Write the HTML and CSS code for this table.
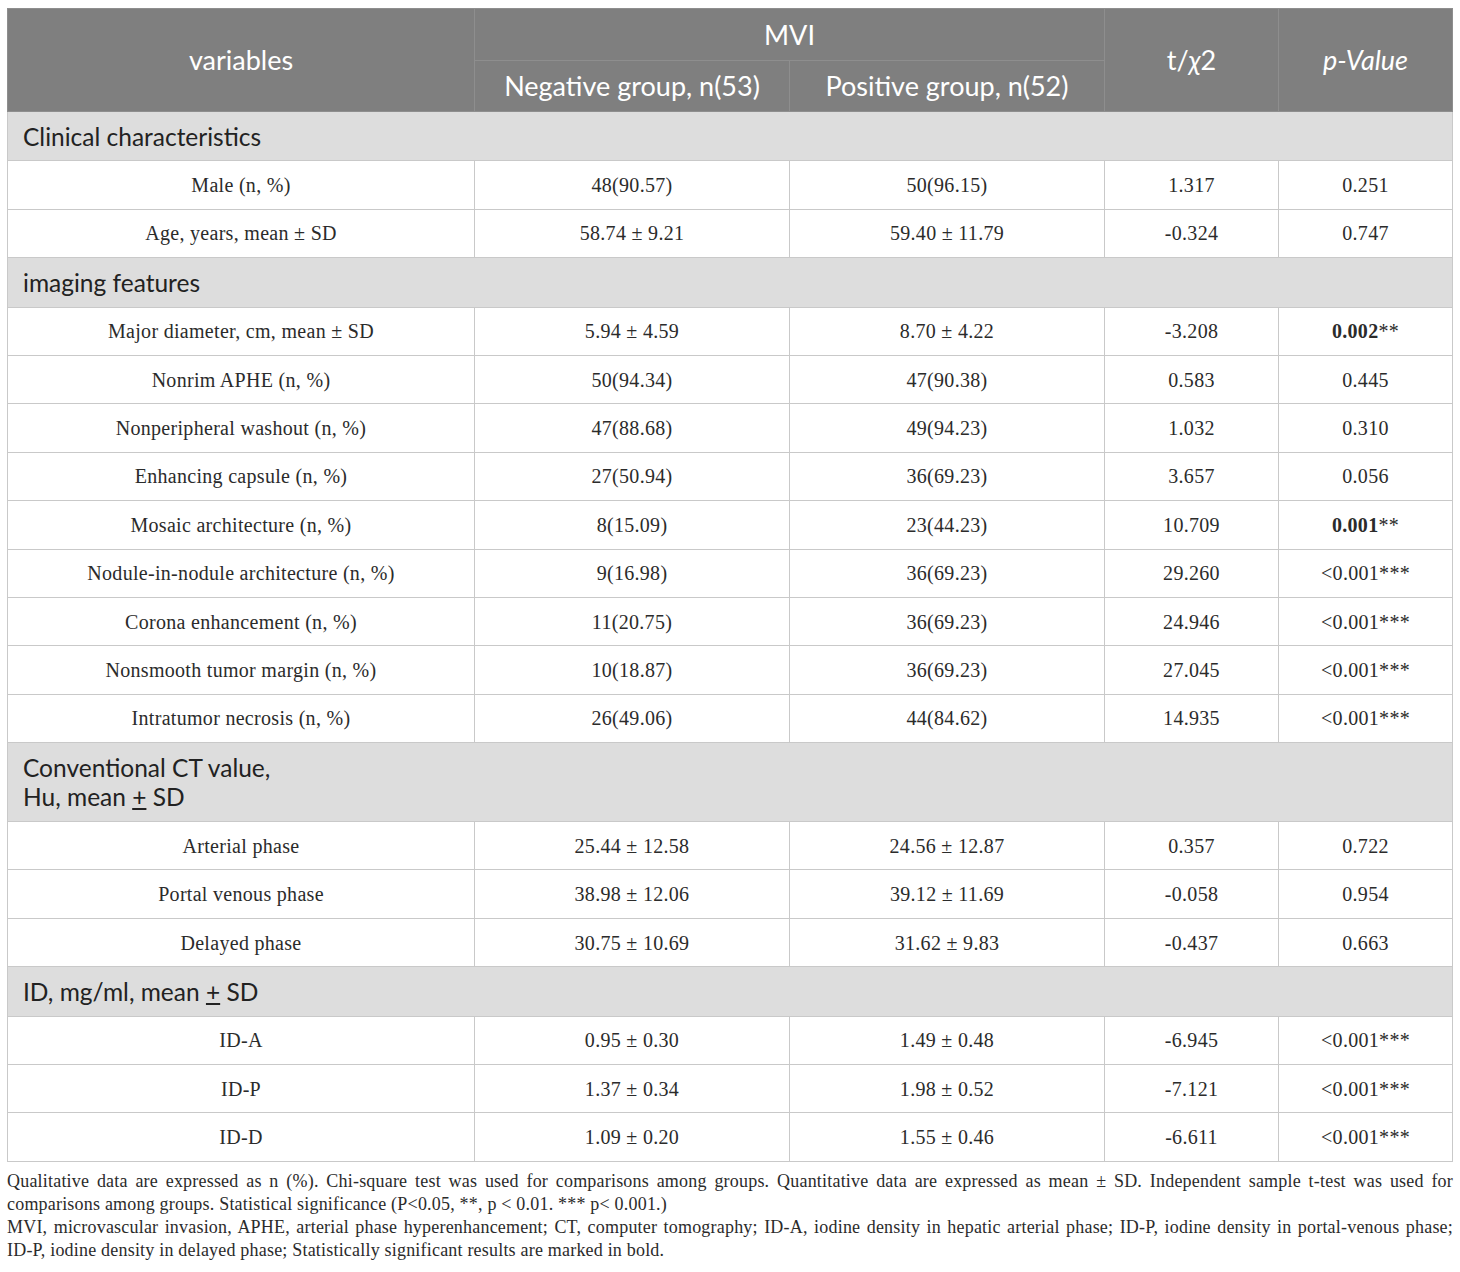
FILE: index.html
```html
<!DOCTYPE html>
<html lang="en">
<head>
<meta charset="utf-8">
<title>MVI table</title>
<link rel="stylesheet" href="styles.css">
</head>
<body>
<div class="page">
<table class="tbl">
  <colgroup>
    <col class="c-var"><col class="c-grp"><col class="c-grp"><col class="c-stat"><col class="c-stat">
  </colgroup>
  <thead>
    <tr class="h1">
      <th rowspan="2">variables</th>
      <th colspan="2">MVI</th>
      <th rowspan="2">t/<i>χ</i>2</th>
      <th rowspan="2"><i>p-Value</i></th>
    </tr>
    <tr class="h2">
      <th>Negative group, n(53)</th>
      <th>Positive group, n(52)</th>
    </tr>
  </thead>
  <tbody>
    <tr class="sec"><td colspan="5">Clinical characteristics</td></tr>
    <tr><td>Male (n, %)</td><td>48(90.57)</td><td>50(96.15)</td><td>1.317</td><td>0.251</td></tr>
    <tr><td>Age, years, mean ± SD</td><td>58.74 ± 9.21</td><td>59.40 ± 11.79</td><td>-0.324</td><td>0.747</td></tr>
    <tr class="sec"><td colspan="5">imaging features</td></tr>
    <tr><td>Major diameter, cm, mean ± SD</td><td>5.94 ± 4.59</td><td>8.70 ± 4.22</td><td>-3.208</td><td><b>0.002</b>**</td></tr>
    <tr><td>Nonrim APHE (n, %)</td><td>50(94.34)</td><td>47(90.38)</td><td>0.583</td><td>0.445</td></tr>
    <tr><td>Nonperipheral washout (n, %)</td><td>47(88.68)</td><td>49(94.23)</td><td>1.032</td><td>0.310</td></tr>
    <tr><td>Enhancing capsule (n, %)</td><td>27(50.94)</td><td>36(69.23)</td><td>3.657</td><td>0.056</td></tr>
    <tr><td>Mosaic architecture (n, %)</td><td>8(15.09)</td><td>23(44.23)</td><td>10.709</td><td><b>0.001</b>**</td></tr>
    <tr><td>Nodule-in-nodule architecture (n, %)</td><td>9(16.98)</td><td>36(69.23)</td><td>29.260</td><td>&lt;0.001***</td></tr>
    <tr><td>Corona enhancement (n, %)</td><td>11(20.75)</td><td>36(69.23)</td><td>24.946</td><td>&lt;0.001***</td></tr>
    <tr><td>Nonsmooth tumor margin (n, %)</td><td>10(18.87)</td><td>36(69.23)</td><td>27.045</td><td>&lt;0.001***</td></tr>
    <tr><td>Intratumor necrosis (n, %)</td><td>26(49.06)</td><td>44(84.62)</td><td>14.935</td><td>&lt;0.001***</td></tr>
    <tr class="sec sec2"><td colspan="5">Conventional CT value,<br>Hu, mean <u>+</u> SD</td></tr>
    <tr><td>Arterial phase</td><td>25.44 ± 12.58</td><td>24.56 ± 12.87</td><td>0.357</td><td>0.722</td></tr>
    <tr><td>Portal venous phase</td><td>38.98 ± 12.06</td><td>39.12 ± 11.69</td><td>-0.058</td><td>0.954</td></tr>
    <tr><td>Delayed phase</td><td>30.75 ± 10.69</td><td>31.62 ± 9.83</td><td>-0.437</td><td>0.663</td></tr>
    <tr class="sec"><td colspan="5">ID, mg/ml, mean <u>+</u> SD</td></tr>
    <tr><td>ID-A</td><td>0.95 ± 0.30</td><td>1.49 ± 0.48</td><td>-6.945</td><td>&lt;0.001***</td></tr>
    <tr><td>ID-P</td><td>1.37 ± 0.34</td><td>1.98 ± 0.52</td><td>-7.121</td><td>&lt;0.001***</td></tr>
    <tr><td>ID-D</td><td>1.09 ± 0.20</td><td>1.55 ± 0.46</td><td>-6.611</td><td>&lt;0.001***</td></tr>
  </tbody>
</table>
<div class="notes">
  <p>Qualitative data are expressed as n (%). Chi-square test was used for comparisons among groups. Quantitative data are expressed as mean ± SD. Independent sample t-test was used for comparisons among groups. Statistical significance (P&lt;0.05, **, p &lt; 0.01. *** p&lt; 0.001.)</p>
  <p>MVI, microvascular invasion, APHE, arterial phase hyperenhancement; CT, computer tomography; <span class="nb">ID-A,</span> iodine density in hepatic arterial phase; <span class="nb">ID-P,</span> iodine density in <span class="nb">portal-venous</span> phase; <span class="nb">ID-P,</span> iodine density in delayed phase; Statistically significant results are marked in bold.</p>
</div>
</div>
</body>
</html>
```

FILE: styles.css
```css
html, body {
  margin: 0;
  padding: 0;
  background: #ffffff;
}
.page {
  padding: 8px 7px 0 7px;
  width: 1446px;
}
.tbl {
  width: 1446px;
  border-collapse: collapse;
  table-layout: fixed;
  font-family: "Liberation Serif", "Times New Roman", serif;
  font-size: 20px;
  letter-spacing: 0.3px;
  color: #2b2b2b;
}
.c-var { width: 467px; }
.c-grp { width: 315px; }
.c-stat { width: 174px; }
.tbl th, .tbl td {
  border: 1px solid #c9c9c9;
  padding: 0 6px;
  text-align: center;
  vertical-align: middle;
  line-height: 24px;
}
.tbl th {
  background: #7f7f7f;
  color: #ffffff;
  font-family: Lato, "Open Sans", sans-serif;
  font-weight: normal;
  font-size: 27px;
  letter-spacing: 0;
  border-color: #8e8e8e;
}
.h1 th { height: 51px; }
.h2 th { height: 50px; }
.tbl td { height: 47.4px; }
.tbl tr.sec td {
  background: #dddddd;
  text-align: left;
  padding-left: 15px;
  font-family: Lato, "Open Sans", sans-serif;
  font-size: 24.5px;
  letter-spacing: 0;
  color: #222222;
  height: 48.4px;
  line-height: 29px;
}
.tbl tr.sec2 td {
  height: 78px;
}
.notes {
  margin-top: 8px;
  font-family: "Liberation Serif", "Times New Roman", serif;
  font-size: 18px;
  letter-spacing: 0.2px;
  line-height: 23px;
  color: #2b2b2b;
  text-align: justify;
}
.notes p {
  margin: 0;
}
.nb {
  white-space: nowrap;
}
```
